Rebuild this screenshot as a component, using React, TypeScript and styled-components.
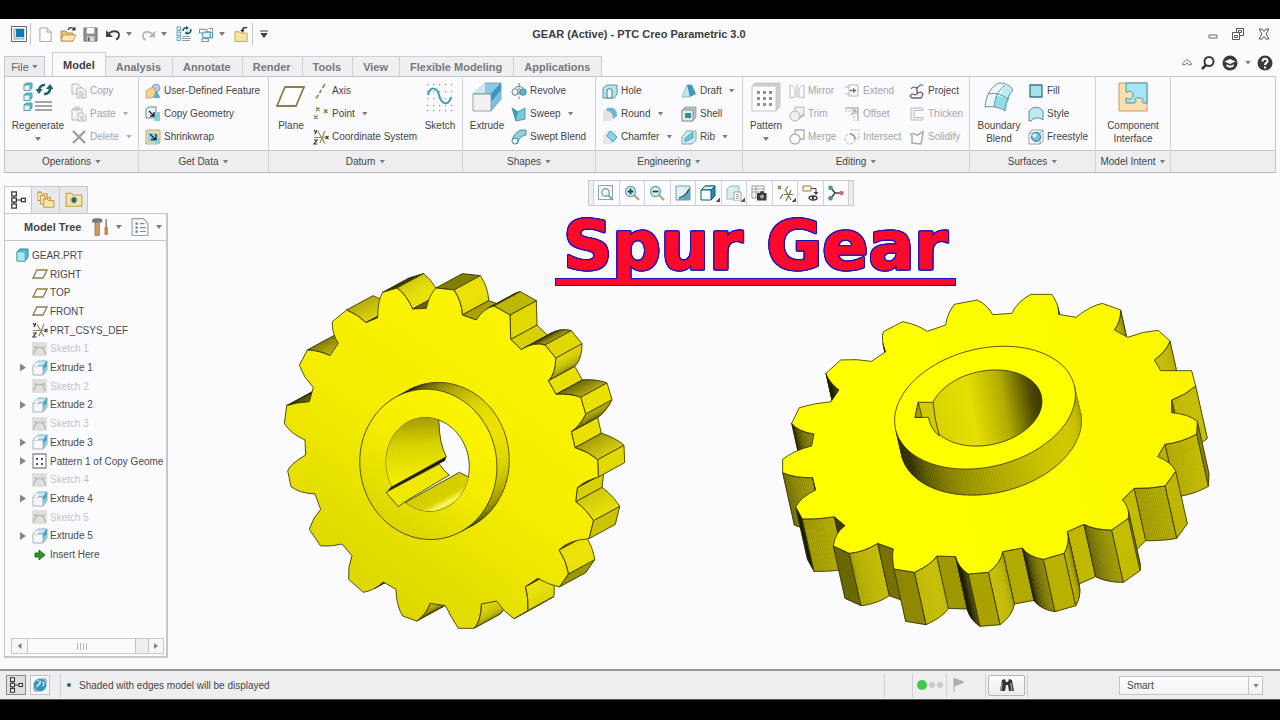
import React from "react";
import styled, { createGlobalStyle, css } from "styled-components";

const Global = createGlobalStyle`
  * { box-sizing: border-box; }
  body { margin: 0; background: #000; font-family: "Liberation Sans", Arial, sans-serif; font-size: 10px; color: #444; }
  button { font: inherit; color: inherit; background: none; border: 0; padding: 0; margin: 0; }
  svg { display: block; flex: none; }
`;

/* ---------- icons ---------- */

const T = "#3f9db3";
const cube = (
  <>
    <path d="M1 6L6 1h9l-4 5z" fill="#c9eaf5" stroke="#6aa3b5" strokeWidth=".8" />
    <path d="M11 6l4-5v9l-4 5z" fill="#4aa5c4" stroke="#6aa3b5" strokeWidth=".8" />
    <path d="M11 10l4-4v4l-4 5z" fill="#8fcfe2" />
    <path d="M1 6h10v9H1z" fill="#f7f7f7" stroke="#8fa4ad" strokeWidth=".8" />
    <path d="M1.500 6L6 1.500V6z" fill="#fff" />
  </>
);
const miniTree = (
  <g fill="#fff" stroke="#333" strokeWidth="1.100">
    <path d="M4.500 5v6M6 8h6" />
    <rect x="2.500" y=".8" width="4" height="3.600" />
    <rect x="2.500" y="6.200" width="4" height="3.600" />
    <rect x="2.500" y="11.600" width="4" height="3.600" />
    <rect x="11" y="6.500" width="3.500" height="3" />
  </g>
);
const folder = (x: number, y: number, w: number, h: number) => (
  <path d={`M${x} ${y}h${w * 0.35}l1.500 1.500H${x + w}v${h}H${x}z`} fill="#f7e3a6" stroke="#c09a4a" strokeWidth=".9" />
);
const csys = (
  <g fill="none" strokeWidth="1.200">
    <path d="M1 8.500h11M5 2.500l7 12M12 2l-5 12" stroke="#9a8a4a" />
    <path d="M1 1l1.500 2M4 1L2 5M1 11h3l-3 4h3.500M12.500 7l3 3M15.500 7l-3 3" stroke="#333" />
  </g>
);
const glass = (sign: React.ReactNode) => (
  <>
    <path d="M10 10l5 5" stroke="#c39a6a" strokeWidth="2.200" />
    <circle cx="6.500" cy="6.500" r="5" fill="#dff4f8" stroke="#6fa4b0" strokeWidth="1.300" />
    {sign}
  </>
);

const ICONS: Record<string, React.ReactNode> = {
  app: (
    <>
      <path d="M.5.500h15v15H.500z" fill="#fff" stroke="#666" />
      <path d="M3 3h10v10H3z" fill="#cfe3ef" stroke="#777" strokeWidth=".7" />
      <path d="M5 3h8v8H5z" fill="#0b79b8" />
    </>
  ),
  new: <path d="M2 1h7.500L14 5.500V15.500H2zM9.500 1v4.500H14" fill="#fcfcfc" stroke="#a3a3a3" />,
  open: (
    <>
      <path d="M1 5h5l1 2h6v8H1z" fill="#e6c67a" stroke="#b8924a" />
      <path d="M3 9h13l-3 6H1z" fill="#fbeab6" stroke="#c09a4a" />
      <path d="M8 4c1-3 4-3 6-1" stroke="#333" fill="none" strokeWidth="1.300" />
      <path d="M15.500.500v4h-4z" fill="#333" />
    </>
  ),
  save: (
    <>
      <path d="M1 1h14v14H1z" fill="#8e9296" stroke="#6f7478" />
      <path d="M4 1h8v6H4z" fill="#fff" />
      <path d="M4 10h8v5H4z" fill="#ddd" />
      <path d="M5 11h2v4H5z" fill="#555" />
    </>
  ),
  undo: (
    <>
      <path d="M3 9c3-5 11-5 11 0 0 2-1 4-3 4.500" fill="none" stroke="#444" strokeWidth="1.800" />
      <path d="M1 4v7h7z" fill="#444" />
    </>
  ),
  redo: (
    <>
      <path d="M13 9c-3-5-11-5-11 0 0 2 1 4 3 4.500" fill="none" stroke="#b5b5b8" strokeWidth="1.800" />
      <path d="M15 4v7H8z" fill="#b5b5b8" />
    </>
  ),
  regen: (
    <>
      {[1, 6, 11].map((y) => (
        <rect key={y} x="1" y={y} width="3.500" height="3.500" fill="#d8f1f6" stroke={T} strokeWidth=".8" />
      ))}
      <path d="M6 10.500h8M6 12.500h9M6 14.500h8" stroke="#999" strokeWidth="1" />
      <path d="M7 5a3 3 0 0 1 4-3M14.500 3a3 3 0 0 1-4 4" fill="none" stroke="#1c5f70" strokeWidth="1.600" />
      <path d="M10 0l3 2-3 2zM11.500 5v4l-3-2z" fill="#1c5f70" />
    </>
  ),
  windows: (
    <g fill="#fff" stroke="#7b8387">
      <path d="M.5 2.500h8v4h-8zM3 12.500h7v3H3z" />
      <path d="M6.500 5.500h8v6h-8z" fill="#dff2f7" stroke="#3f8ba0" />
      <path d="M4 5.500h8v6H4z" fill="#dff2f7" stroke="#3f8ba0" />
      <path d="M10.500 1.500h4v3" fill="none" />
    </g>
  ),
  closefolder: (
    <>
      {folder(1, 5, 13, 9)}
      <path d="M14 1c-3-1-5 0-5 3" fill="none" stroke="#333" strokeWidth="1.500" />
      <path d="M6.500 3h5L9 6z" fill="#333" />
    </>
  ),
  regenerate: (
    <>
      {[1, 11, 21].map((y) => (
        <g key={y} stroke="#57a3b8">
          <path d={`M1 ${y + 2}l2-2h6v5l-2 2z`} fill="#5db7cd" />
          <rect x="1" y={y + 2} width="6" height="5.500" fill="#dff5f9" />
        </g>
      ))}
      <path d="M12 20h17M12 24h17M12 28h17" stroke="#8b8b8b" strokeWidth="1.500" />
      <path d="M16 9a5.500 5.500 0 0 1 6-6M27 5a5.500 5.500 0 0 1-6 7" fill="none" stroke="#1c6072" strokeWidth="2.500" />
      <path d="M12.500 7h7L16 12zM23 7l4-5 3.500 5z" fill="#1c6072" />
    </>
  ),
  copy: (
    <g fill="#f4f4f4" stroke="#b9b9bb">
      <path d="M1 1h6l3 3v7H1z" />
      <path d="M6 5h6l3 3v7H6zM8 9h4M8 11h5M8 13h5" />
    </g>
  ),
  paste: (
    <g fill="#f4f4f4" stroke="#b9b9bb">
      <path d="M1 3h10v11H1zM4 1h4v3H4z" />
      <path d="M7 7h5l3 3v5H7zM9 11h4M9 13h4" />
    </g>
  ),
  del: <path d="M2 2l12 12M14 2L2 14" stroke="#9a9a9a" strokeWidth="2.200" />,
  udf: (
    <>
      <circle cx="11" cy="5" r="4" fill="#b8cdf0" stroke="#7b93bb" strokeWidth=".8" />
      <path d="M1 8l4-3h5v7l-3 3H1z" fill="#f4d48c" stroke="#b9935a" strokeWidth=".7" />
      <path d="M8 15l3.500-8 4 8z" fill="#5badd0" />
    </>
  ),
  copygeom: (
    <>
      <path d="M1 3l3-2h7v9l-3 2H1z" fill="#e7f4f7" stroke="#6e858c" />
      <path d="M9 6h6v9H9z" fill="#84cfe0" />
      <path d="M4 5l5 5M9 6v4H5" stroke="#222" strokeWidth="1.300" fill="none" />
    </>
  ),
  shrink: (
    <>
      <path d="M1 2l2-1h12v12l-2 2H1z" fill="#e9dcae" stroke="#b19c5c" strokeWidth=".8" />
      <path d="M3 4h10v9H3z" fill="#8fd3e2" />
      <path d="M10 9h5v6h-5z" fill="#84cfe0" />
      <path d="M5 5l5 5M11 5v5.500H6" stroke="#123" strokeWidth="1.300" fill="none" />
    </>
  ),
  plane: <path d="M9 5h19l-8 19H1z" fill="#fff" stroke="#8d7f45" strokeWidth="1.800" />,
  axis: <path d="M12 1l-2.500 4M8.500 7l-2 3M5.500 12L3 15.500" stroke="#8d7f45" strokeWidth="1.500" />,
  point: <path d="M3 1.500l3.500 3.500m0-3.500L3 5M11 3.500l3.500 3.500m0-3.500L11 7M1 9.500l3.500 3.500m0-3.500L1 13" stroke="#8d7f45" strokeWidth="1.400" />,
  csys,
  sketch: (
    <>
      {[2, 8, 14, 20, 26].flatMap((x) => [2, 9, 16, 23, 28].map((y) => <rect key={`${x}-${y}`} x={x} y={y} width="1.200" height="1.200" fill="#7a93b5" />))}
      <path d="M3 13c2-9 9-8 11 0s9 13 12 2" fill="none" stroke="#35a3bb" strokeWidth="2" />
    </>
  ),
  extrudebig: (
    <>
      <path d="M1 12L13 1h16l-10 11z" fill="#8cc9e4" stroke="#6aa0b8" strokeWidth=".8" />
      <path d="M13 1v10H1z" fill="#cfe9f4" />
      <path d="M19 12L29 1v16L19 29z" fill="#3d93c0" stroke="#5c9bb8" strokeWidth=".8" />
      <path d="M29 8v9L19 29v-9z" fill="#7cc0dd" />
      <path d="M1 12h18v17H1z" fill="#f1f1f3" stroke="#8d999f" strokeWidth=".9" />
    </>
  ),
  revolve: (
    <>
      <path d="M8 0v16" stroke="#777" strokeDasharray="3 1.500" />
      <ellipse cx="4" cy="9" rx="3" ry="3.300" fill="#eef8fa" stroke="#62808a" />
      <circle cx="12" cy="9" r="3.300" fill="#5cb4cc" stroke="#3c8ba1" />
      <path d="M4 5c2-2 6-2 8 0" stroke="#777" fill="none" />
    </>
  ),
  sweep: (
    <>
      <path d="M1 2l6 4 7-4v11l-9 2z" fill="#7cc8dd" stroke="#4b99b0" />
      <path d="M1 2l6 4-2 9z" fill="#3f9ab5" />
    </>
  ),
  blend: (
    <>
      <path d="M1 12c1-6 5-10 10-11h4v5c-5 1-8 4-8 8l-3 1z" fill="#8fd0e1" stroke="#4b8da3" />
      <ellipse cx="4" cy="12" rx="3" ry="3" fill="#e9f6fa" stroke="#57899a" />
    </>
  ),
  hole: (
    <>
      <path d="M1 5l4-3h10v9l-3 4H1z" fill="#b9e3ec" stroke="#5a99aa" />
      <path d="M5 15V8a2.500 2.500 0 0 1 5 0v7z" fill="#eefafc" stroke="#3d8397" />
    </>
  ),
  round: (
    <>
      <path d="M1 5l4-3h5v13H1z" fill="#e3e5e7" />
      <path d="M5 2h5c4 1 5 4 5 8l-4 3c0-5-2-8-6-8z" fill="#65b9d0" stroke="#8cc4d2" strokeWidth=".7" />
    </>
  ),
  chamfer: (
    <>
      <path d="M1 6l4-4h9v9l-4 4H1z" fill="#e3e5e7" />
      <path d="M8 2l7 6-4 5-6-6z" fill="#86d3e3" stroke="#4aa0b6" />
    </>
  ),
  draft: (
    <>
      <path d="M1 14L6 2h5l-2 12z" fill="#c3e6ef" stroke="#6cabbc" strokeWidth=".7" />
      <path d="M6 2l3 12 6-3-4-9z" fill="#3c9dbb" />
    </>
  ),
  shell: (
    <>
      <path d="M1 4l3-3h11v10l-3 4H1z" fill="#b9bfc2" stroke="#8c9397" strokeWidth=".7" />
      <path d="M1 4h11v11H1z" fill="#e6eaec" stroke="#8c9397" />
      <path d="M4 7h6v5H4z" fill="#2f8da5" />
    </>
  ),
  rib: (
    <>
      <path d="M1 8l5-6h9v9l-4 4H1z" fill="#d5edf2" stroke="#78a4b0" />
      <path d="M4 13V9l8-6v6z" fill="#6fc5d7" stroke="#4a9cb0" strokeWidth=".8" />
    </>
  ),
  pattern: (
    <>
      <path d="M1 4l3-3h25v24l-4 4z" fill="#d0d0d4" stroke="#bbb" strokeWidth=".7" />
      <path d="M1 4h24v25H1z" fill="#fff" stroke="#c4c4c8" />
      {[6, 12, 18].flatMap((x) => [9, 15, 21].map((y) => <path key={`${x}-${y}`} d={`M${x} ${y}h3v3h-3z`} fill="#8e9097" />))}
    </>
  ),
  mirror: <path d="M1 2c4 1 5 3 5 6v6L1 15zM15 2c-4 1-5 3-5 6v6l5 1zM8 1v14" fill="none" stroke="#bcbcc0" />,
  trim: (
    <g fill="#f1f1f3" stroke="#b5b5b9">
      <path d="M6 1h9v9H6z" />
      <circle cx="6" cy="10" r="5" />
      <path d="M10 13l5-5" stroke="#999" />
    </g>
  ),
  merge: (
    <g fill="none" stroke="#adadb1" strokeWidth="1.300">
      <path d="M6 4V1h9v9h-4" />
      <circle cx="6" cy="10" r="5" />
    </g>
  ),
  extend: (
    <g fill="none" stroke="#b5b5b9">
      <path d="M5 2h9v11H5zM1 4h4M1 11h4" />
      <path d="M6 7.500h5M9 5.500l2.500 2L9 9.500" stroke="#777" strokeWidth="1.300" />
    </g>
  ),
  offset: (
    <g fill="none" stroke="#b5b5b9">
      <path d="M1 2h13v13" strokeWidth="1.500" />
      <path d="M1 5h9v10" strokeDasharray="2 1.500" />
      <path d="M7 9l5-5M12 8V4H8" stroke="#999" />
    </g>
  ),
  intersect: (
    <g fill="none" stroke="#b5b5b9">
      <path d="M7 1h8v9H9" strokeDasharray="2 1.500" />
      <circle cx="6" cy="10" r="5" strokeDasharray="3 1.500" />
      <path d="M6 5a5 5 0 0 1 5 5" strokeWidth="1.800" stroke="#999" />
    </g>
  ),
  project: (
    <g fill="none" strokeWidth="1.300">
      <path d="M2 6c3-5 4 1 7-2s3-3 5-1" stroke="#777" />
      <path d="M1 13c3-5 4 1 7-2s4-2 6 0l-2 4H3z" stroke="#7a5a86" />
      <path d="M8 4v6" stroke="#555" />
    </g>
  ),
  thicken: <path d="M14 2H2v12h12v-2.500H5v-7h9z" fill="#f3f3f5" stroke="#bcbcc0" />,
  solidify: <path d="M1 6c4-5 6 3 9-1l5-3M3 6v8l9 1 2-11" fill="none" stroke="#aaaaae" strokeWidth="1.500" />,
  boundary: (
    <>
      <path d="M1 25C2 12 8 4 15 1c7 0 11 2 14 7-4 4-7 11-8 21-6-4-12-5-20-4z" fill="#e8f7fa" />
      <path d="M12 14c5 0 9 2 13 3-2 4-3 8-4 12-4-3-7-4-10-4 0-5 0-8 1-11z" fill="#8fdbe9" />
      <path d="M20 3c5 0 7 2 9 5l-5 9-7-3z" fill="#bdeaf2" />
      <path d="M1 25C2 12 8 4 15 1c7 0 11 2 14 7-4 4-7 11-8 21-6-4-12-5-20-4zM5 12c8-2 14 2 20 5M21 3c-7 6-10 12-11 22" fill="none" stroke="#6a8f99" strokeWidth="1" />
    </>
  ),
  fill: <path d="M2 2h12v12H2z" fill="#a5e0ec" stroke="#3b7285" strokeWidth="1.300" />,
  style: <path d="M1 5c4-5 10-5 14 0v9c-2-2-5-2-6-2-3 0-5 1-6 3H1z" fill="#bfe8f1" stroke="#5b8b99" />,
  freestyle: (
    <>
      <path d="M1 4l3-3h11v11l-3 3H1zM1 4h11v11M12 4l3-3" fill="none" stroke="#7c8a90" strokeWidth=".8" />
      <circle cx="8" cy="8" r="4.500" fill="#6ec3d7" stroke="#2b7e95" />
      <circle cx="6.500" cy="6.500" r="2" fill="#dff5fa" />
    </>
  ),
  component: (
    <>
      <path d="M1 1h28v28H1z" fill="#fbdfae" stroke="#c69c62" strokeWidth="1" />
      <path
        d="M8 1h21v20h-4c-1-1-2-2 0-3 1-3-9-3-8 0 2 1 1 2 0 3H8v-5c2 0 2 2 4 1 4-1 4-7 0-8-2 0-2 2-4 1z"
        fill="#a6e6f2"
        stroke="#4b93a6"
        strokeWidth="1"
      />
    </>
  ),
  tree: miniTree,
  folders: (
    <>
      {folder(0, 1, 9, 6)}
      {folder(3, 4, 9, 6)}
      {folder(6, 7, 9, 6)}
    </>
  ),
  favfolder: (
    <>
      {folder(1, 2, 14, 10)}
      <path d="M8 5v6M5 8h6M6 6l4 4M10 6l-4 4" stroke="#175e73" strokeWidth="1.100" />
    </>
  ),
  hammer: (
    <>
      <path d="M3.500 3h4v12.500h-4z" fill="#c79a68" stroke="#8f6a42" strokeWidth=".6" />
      <path d="M1 4V1.500C3-.500 8 .500 10 1v3z" fill="#777" />
      <path d="M13.500 1v8" stroke="#8a8a8a" strokeWidth="1.500" />
      <path d="M13.500 8v7" stroke="#c4814d" strokeWidth="3" />
    </>
  ),
  list: (
    <>
      <path d="M1 .5h10l4 4v11H1z" fill="#fbfbfb" stroke="#9aa0a4" />
      <path d="M4 5h2M4 8.500h2M4 12h2" stroke="#3f8ba0" strokeWidth="2" />
      <path d="M8 5h4M8 8.500h5M8 12h5" stroke="#888" />
    </>
  ),
  part: (
    <>
      <path d="M3 5l3-3h8v8l-3 4H3z" fill="#57c2dc" stroke="#2f7f96" />
      <path d="M3 5h8v9H3z" fill="#a8e8f5" stroke="#3f93a9" strokeWidth=".6" />
    </>
  ),
  planesmall: <path d="M5 4h10l-4 8H1z" fill="#fff" stroke="#8d7f45" strokeWidth="1.300" />,
  sketchsmall: (
    <>
      <path d="M0 1h15v14H0z" fill="#dfdfdc" />
      <path d="M1.500 13c2-9 10-9 12 0M2 6h3M10 6h3" fill="none" stroke="#b0b2ac" strokeWidth="1.200" />
    </>
  ),
  extrude: cube,
  patternsmall: (
    <>
      <path d="M1 1h13v14H1z" fill="#fff" stroke="#8b8b9b" strokeWidth="1.300" />
      <path d="M4 5h2v2H4zM9 5h2v2H9zM4 10h2v2H4zM9 10h2v2H9z" fill="#555" />
    </>
  ),
  insert: <path d="M3 6h4V3l6 5-6 5v-3H3z" fill="#2c9a1e" stroke="#14600c" strokeWidth=".8" />,
  refit: (
    <>
      <path d="M.5.500h14v14H.500z" fill="none" stroke="#8fa0a5" />
      <path d="M10 10l5 5" stroke="#9a9a9a" strokeWidth="2" />
      <circle cx="7.500" cy="7.500" r="3.800" fill="#e5f5f8" stroke="#62949f" strokeWidth="1.200" />
    </>
  ),
  zoomin: glass(<path d="M3.500 6.500h6M6.500 3.500v6" stroke="#124f60" strokeWidth="1.800" />),
  zoomout: glass(<path d="M3.500 6.500h6" stroke="#124f60" strokeWidth="1.800" />),
  repaint: (
    <>
      <path d="M1 1h14v14H1z" fill="#5ea9c2" stroke="#6f9fb0" />
      <path d="M1.500 1.500h13c-1 7-5 12-13 13z" fill="#dff1f6" />
      <path d="M4 13c4-1 8-4 10-9" stroke="#234f60" fill="none" strokeWidth="1.500" />
    </>
  ),
  display: (
    <>
      <path d="M1 5l4-4h10v10l-4 4z" fill="#2b8ba5" stroke="#135a6e" />
      <path d="M1 5l4-4h10l-4 4z" fill="#cfeff5" stroke="#135a6e" />
      <path d="M1 5h10v10H1z" fill="#f5fbfc" stroke="#135a6e" />
    </>
  ),
  saved: (
    <>
      <path d="M1 4l3-3h9v9l-3 4H1z" fill="#d9eef3" stroke="#9bb5bd" />
      <path d="M8 7h7v9H8zM10 9.500h3M10 11.500h3M10 13.500h3" fill="#fff" stroke="#8a8a8a" strokeWidth=".8" />
    </>
  ),
  camera: (
    <>
      <path d="M1 1h12v12H1zM1 4h12M1 7h12M5 1v12" fill="#fff" stroke="#999" />
      <path d="M6 8h3l1-2h2l1 2h2.500v7.500H6z" fill="#3a3a3a" />
      <circle cx="11" cy="11.500" r="2" fill="#aaa" />
    </>
  ),
  datum: <path d="M1 1l3 3m0-3L1 4M11 1L8 6M6 9l-3 5M7 9.500h9M9 6l5 9M14 5l-5 11" stroke="#7d713f" strokeWidth="1.200" fill="none" />,
  annotation: (
    <>
      <path d="M1 1h8v5H1z" fill="#fff9e6" stroke="#8d7f45" />
      <path d="M9 3.500h5V8" fill="none" stroke="#444" />
      <path d="M11.500 7h5L14 10z" fill="#444" />
      <ellipse cx="11" cy="13" rx="4" ry="2" fill="#fff" stroke="#333" strokeWidth="1.300" />
      <circle cx="11" cy="13" r="1.300" fill="#333" />
    </>
  ),
  spin: (
    <>
      <path d="M7 8h6M7 8L3 3M7 8l-4 5" stroke="#444" strokeWidth="1.500" />
      <circle cx="2.500" cy="2.800" r="2.300" fill="#4f9c72" />
      <circle cx="2.500" cy="13.200" r="2.300" fill="#4f8ea5" />
      <circle cx="13.500" cy="8" r="2.300" fill="#cf6d76" />
    </>
  ),
  globe: (
    <>
      <circle cx="8" cy="8" r="6.500" fill="#2f95cb" />
      <path d="M5 4c2-1 4 0 3 2s-3 2-3 4M10.500 5c2 1 2 3 0 4" fill="none" stroke="#bfe6f7" strokeWidth="1.800" />
      <ellipse cx="8" cy="8" rx="8" ry="3.800" transform="rotate(-45 8 8)" fill="none" stroke="#6b8796" />
    </>
  ),
  flag: <path d="M3 1v14M3.500 1.500L13 5l-9.500 4z" fill="#a9acb0" stroke="#a9acb0" />,
  binoculars: (
    <>
      <path d="M1 14L3 3l3-1 1 3h2l1-3 3 1 2 11h-5l-1-6H7l-1 6z" fill="#333" />
      <path d="M3 6l-1 8M12 6l1 8" stroke="#999" strokeWidth="1.500" />
    </>
  ),
  min: <path d="M5 9h8v3H5z" fill="#fff" stroke="#666" />,
  restore: (
    <g fill="#fff" stroke="#555">
      <path d="M6.500 2.500h7v7h-7z" />
      <path d="M8.500 4.500h3v2h-3z" />
      <path d="M2.500 6.500h7v7h-7z" />
      <path d="M4.500 9.500h3v2h-3z" />
    </g>
  ),
  close: <path d="M3 3h3l2 2.500L10 3h3l-3 5 3 5h-3l-2-2.500L6 13H3l3-5z" fill="#fff" stroke="#555" />,
  collapse: <path d="M3 8.500L8 4l5 4.500v1.500h-3L8 8l-2 2H3z" fill="#fff" stroke="#666" />,
  search: (
    <>
      <path d="M6 10l-4 4" stroke="#3a3a3a" strokeWidth="2.500" />
      <circle cx="9" cy="6.500" r="4.500" fill="none" stroke="#3a3a3a" strokeWidth="2" />
    </>
  ),
  learn: (
    <>
      <circle cx="8" cy="8" r="7.500" fill="#3a3a3a" />
      <path d="M2.500 6.500L8 4l5.500 2.500L8 9z" fill="#fff" />
      <path d="M4.500 9c2 2 5 2 7 0v2.500c-2 1.500-5 1.500-7 0z" fill="#fff" />
    </>
  ),
  help: (
    <>
      <circle cx="8" cy="8" r="7.500" fill="#3a3a3a" />
      <path d="M5.500 6.500c0-3.500 5-3.500 5-.5 0 2-2.500 1.800-2.500 4" fill="none" stroke="#fff" strokeWidth="2" />
      <path d="M7 11.500h2v2H7z" fill="#fff" />
    </>
  ),
};

const Icon = ({ name, size = 16, box = 16 }: { name: string; size?: number; box?: number }) => (
  <svg width={size} height={size} viewBox={`0 0 ${box} ${box}`} fill="none" aria-hidden="true">
    {ICONS[name]}
  </svg>
);

const Caret = styled.span`
  flex: none;
  width: 6px;
  height: 4px;
  background: #7b7b7f;
  clip-path: polygon(0 0, 100% 0, 50% 100%);
`;

/* ---------- frame ---------- */

const Page = styled.div`
  min-height: 100vh;
  padding: 19px 0 20px;
  display: flex;
  flex-direction: column;
  background: #000;
`;
const Window = styled.div`
  flex: 1;
  display: flex;
  flex-direction: column;
  background: #fbfbfe;
`;
const TitleBar = styled.header`
  height: 30px;
  padding: 0 8px 0 11px;
  display: grid;
  grid-template-columns: 1fr auto 1fr;
  align-items: center;
`;
const Divider = styled.span`
  flex: none;
  width: 1px;
  height: 22px;
  background: #c4c4c8;
`;
const IconButton = styled.button`
  display: flex;
  align-items: center;
  gap: 7px;
`;
const QuickBar = styled.div`
  display: flex;
  align-items: center;
  gap: 7px;
  ${Divider} {
    margin-left: -4px;
  }
  ${Caret} {
    margin: 0 2px 0 -2px;
  }
`;
const AppTitle = styled.h1`
  margin: 0 5px 0 0;
  font-size: 11px;
  font-weight: bold;
  color: #3c3c3c;
`;
const WindowButtons = styled.div`
  display: flex;
  justify-content: flex-end;
  gap: 10px;
`;

const TabRow = styled.nav`
  height: 27px;
  padding: 0 7px 0 4px;
  display: flex;
  align-items: flex-end;
`;
const FileTab = styled.button`
  height: 20px;
  width: 41px;
  margin-right: 7px;
  display: flex;
  align-items: center;
  justify-content: center;
  gap: 3px;
  border: 1px solid #c9c9cd;
  border-bottom: 0;
  background: #ececf0;
  font-size: 11px;
  color: #66666a;
`;
const Tab = styled.button<{ $active?: boolean }>`
  height: 20px;
  padding: 0 11px 0 10px;
  border: 1px solid #cfcfd3;
  border-width: 1px 1px 0 0;
  background: #efeff2;
  font-size: 11px;
  font-weight: bold;
  color: #77777c;
  ${(p) =>
    p.$active &&
    css`
      height: 25px;
      margin-bottom: -1px;
      padding: 0 10px;
      border-left-width: 1px;
      background: #fbfbfe;
      color: #3c3c3e;
    `}
`;
const TabTools = styled.div`
  margin-left: auto;
  align-self: center;
  display: flex;
  align-items: center;
  gap: 6px;
`;

const Ribbon = styled.section`
  margin: 0 4px;
  display: flex;
  border: 1px solid #c6c6ca;
  border-bottom-color: #b8b8bc;
`;
const Group = styled.div<{ $w: number; $last?: boolean }>`
  flex: ${(p) => p.$w} 1 ${(p) => p.$w}px;
  min-width: 0;
  display: flex;
  flex-direction: column;
  border-right: ${(p) => (p.$last ? "0" : "1px solid #d3d3d7")};
`;
const GroupBody = styled.div<{ $cols: string; $pad?: number }>`
  height: 73px;
  padding: 2px 0 0 ${(p) => p.$pad ?? 0}px;
  display: grid;
  grid-template-columns: ${(p) => p.$cols};
`;
const GroupTitle = styled.button`
  height: 22px;
  width: 100%;
  display: flex;
  align-items: center;
  justify-content: center;
  gap: 4px;
  border-top: 1px solid #c6c6ca;
  background: #eeeef1;
  white-space: nowrap;
`;
const BigButton = styled.button`
  padding-top: 3px;
  display: flex;
  flex-direction: column;
  align-items: center;
  align-self: start;
  gap: 7px;
  line-height: 13px;
`;
const BigLabel = styled.span`
  display: flex;
  flex-direction: column;
  align-items: center;
  gap: 5px;
  text-align: center;
`;
const Column = styled.div`
  display: grid;
  grid-auto-rows: 23px;
`;
const Command = styled.button<{ $muted?: boolean }>`
  display: flex;
  align-items: center;
  justify-self: start;
  gap: 3px;
  white-space: nowrap;
  color: ${(p) => (p.$muted ? "#a4a4a8" : "#444")};
  ${Caret} {
    margin-left: 4px;
    opacity: ${(p) => (p.$muted ? 0.6 : 1)};
  }
`;

type Cmd = [icon: string, label: string, flags?: string];
type Part = { big: string; label: React.ReactNode; menu?: boolean } | Cmd[];
type GroupData = { title: string; w: number; cols: string; pad?: number; parts: Part[] };

const GROUPS: GroupData[] = [
  { title: "Operations", w: 134, cols: "66px 1fr", parts: [{ big: "regenerate", label: "Regenerate", menu: true }, [["copy", "Copy", "m"], ["paste", "Paste", "mc"], ["del", "Delete", "mc"]]] },
  { title: "Get Data", w: 130, cols: "1fr", pad: 6, parts: [[["udf", "User-Defined Feature"], ["copygeom", "Copy Geometry"], ["shrink", "Shrinkwrap"]]] },
  { title: "Datum", w: 194, cols: "44px 105px 1fr", parts: [{ big: "plane", label: "Plane" }, [["axis", "Axis"], ["point", "Point", "c"], ["csys", "Coordinate System"]], { big: "sketch", label: "Sketch" }] },
  { title: "Shapes", w: 133, cols: "48px 1fr", parts: [{ big: "extrudebig", label: "Extrude" }, [["revolve", "Revolve"], ["sweep", "Sweep", "c"], ["blend", "Swept Blend"]]] },
  { title: "Engineering", w: 147, cols: "79px 1fr", pad: 6, parts: [[["hole", "Hole"], ["round", "Round", "c"], ["chamfer", "Chamfer", "c"]], [["draft", "Draft", "c"], ["shell", "Shell"], ["rib", "Rib", "c"]]] },
  {
    title: "Editing",
    w: 227,
    cols: "46px 55px 65px 1fr",
    parts: [
      { big: "pattern", label: "Pattern", menu: true },
      [["mirror", "Mirror", "m"], ["trim", "Trim", "m"], ["merge", "Merge", "m"]],
      [["extend", "Extend", "m"], ["offset", "Offset", "m"], ["intersect", "Intersect", "m"]],
      [["project", "Project"], ["thicken", "Thicken", "m"], ["solidify", "Solidify", "m"]],
    ],
  },
  { title: "Surfaces", w: 126, cols: "58px 1fr", parts: [{ big: "boundary", label: <>Boundary<br />Blend</> }, [["fill", "Fill"], ["style", "Style"], ["freestyle", "Freestyle"]]] },
  { title: "Model Intent", w: 75, cols: "1fr", parts: [{ big: "component", label: <>Component<br />Interface</> }] },
];

const RibbonGroup = ({ title, w, cols, pad, parts }: GroupData) => (
  <Group $w={w}>
    <GroupBody $cols={cols} $pad={pad}>
      {parts.map((part, i) =>
        Array.isArray(part) ? (
          <Column key={i}>
            {part.map(([icon, label, flags = ""]) => (
              <Command key={label} $muted={flags.includes("m")}>
                <Icon name={icon} />
                {label}
                {flags.includes("c") && <Caret />}
              </Command>
            ))}
          </Column>
        ) : (
          <BigButton key={i}>
            <Icon name={part.big} size={30} box={30} />
            <BigLabel>
              <span>{part.label}</span>
              {part.menu && <Caret />}
            </BigLabel>
          </BigButton>
        )
      )}
    </GroupBody>
    <GroupTitle>
      {title}
      <Caret />
    </GroupTitle>
  </Group>
);

/* ---------- workspace ---------- */

const Workspace = styled.main`
  flex: 1;
  display: grid;
  grid-template-columns: 168px 1fr;
`;
const Sidebar = styled.aside`
  padding: 13px 0 11px 4px;
  min-width: 0;
  display: flex;
  flex-direction: column;
`;
const PanelTabs = styled.div`
  display: flex;
  height: 27px;
`;
const PanelTab = styled.button<{ $active?: boolean }>`
  width: 28px;
  display: grid;
  place-items: center;
  border: 1px solid #c9c9cd;
  border-left-width: ${(p) => (p.$active ? 1 : 0)}px;
  border-bottom: 0;
  background: ${(p) => (p.$active ? "#fbfbfe" : "#e9e9ed")};
`;
const Panel = styled.div`
  flex: 1;
  min-width: 0;
  display: flex;
  flex-direction: column;
  border: 1px solid #c6c6ca;
  border-width: 1px 2px 2px 1px;
`;
const PanelHeader = styled.div`
  height: 27px;
  padding: 0 4px 0 19px;
  display: flex;
  align-items: center;
  justify-content: space-between;
  border-bottom: 1px solid #c6c6ca;
`;
const PanelTitle = styled.h2`
  margin: 0;
  font-size: 11px;
  color: #444;
`;
const Tree = styled.ul`
  height: 318px;
  margin: 5px 0 auto;
  padding: 0;
  list-style: none;
  display: grid;
  grid-auto-rows: 1fr;
`;
const TreeRow = styled.li<{ $root?: boolean; $muted?: boolean }>`
  padding-left: ${(p) => (p.$root ? 9 : 15)}px;
  display: flex;
  align-items: center;
  gap: 2px;
  white-space: nowrap;
  color: ${(p) => (p.$muted ? "#c3c3c6" : "#4a4a4c")};
`;
const Expander = styled.span<{ $on: boolean }>`
  flex: none;
  width: 6px;
  height: 8px;
  margin-right: 4px;
  background: ${(p) => (p.$on ? "#85858a" : "transparent")};
  clip-path: polygon(0 0, 100% 50%, 0 100%);
`;
const ScrollBar = styled.div`
  height: 16px;
  margin: 0 2px 2px 6px;
  display: flex;
  border: 1px solid #c9c9cd;
  background: #eeeef1;
`;
const ScrollArrow = styled.button<{ $left?: boolean }>`
  width: 15px;
  display: grid;
  place-items: center;
  border-left: ${(p) => (p.$left ? "0" : "1px solid #c4c4c8")};
  background: #f6f6f9;
  &::before {
    content: "";
    width: 4px;
    height: 6px;
    background: #808085;
    clip-path: ${(p) => (p.$left ? "polygon(100% 0, 0 50%, 100% 100%)" : "polygon(0 0, 100% 50%, 0 100%)")};
  }
`;
const ScrollThumb = styled.div`
  flex: 1;
  margin-right: 12px;
  display: grid;
  place-items: center;
  border: 1px solid #c4c4c8;
  border-width: 0 1px;
  background: #fafafc;
  &::before {
    content: "";
    width: 10px;
    height: 7px;
    background: repeating-linear-gradient(90deg, #b5b5b9 0 1px, transparent 1px 3px);
  }
`;

type Row = { icon: string; label: string; root?: boolean; muted?: boolean; open?: boolean };
const TREE: Row[] = [
  { icon: "part", label: "GEAR.PRT", root: true },
  { icon: "planesmall", label: "RIGHT" },
  { icon: "planesmall", label: "TOP" },
  { icon: "planesmall", label: "FRONT" },
  { icon: "csys", label: "PRT_CSYS_DEF" },
  { icon: "sketchsmall", label: "Sketch 1", muted: true },
  { icon: "extrude", label: "Extrude 1", open: true },
  { icon: "sketchsmall", label: "Sketch 2", muted: true },
  { icon: "extrude", label: "Extrude 2", open: true },
  { icon: "sketchsmall", label: "Sketch 3", muted: true },
  { icon: "extrude", label: "Extrude 3", open: true },
  { icon: "patternsmall", label: "Pattern 1 of Copy Geome", open: true },
  { icon: "sketchsmall", label: "Sketch 4", muted: true },
  { icon: "extrude", label: "Extrude 4", open: true },
  { icon: "sketchsmall", label: "Sketch 5", muted: true },
  { icon: "extrude", label: "Extrude 5", open: true },
  { icon: "insert", label: "Insert Here" },
];

const Canvas = styled.section`
  min-width: 0;
  padding-top: 7px;
  display: flex;
  flex-direction: column;
`;
const ViewBar = styled.div`
  align-self: center;
  width: 266px;
  height: 26px;
  margin-right: 6px;
  display: flex;
  border: 1px solid #c9c9cd;
  padding: 0 4px;
  background: #eeeef1;
`;
const ViewButton = styled.button<{ $menu: boolean }>`
  flex: 1;
  display: grid;
  place-items: center;
  border-left: 1px solid #d3d3d7;
  background: ${(p) =>
    p.$menu ? "linear-gradient(135deg, transparent 50%, #555 50%) right 1px bottom 3px / 4px 4px no-repeat #fcfcfe" : "#fcfcfe"};
  &:last-child {
    border-right: 1px solid #d3d3d7;
  }
`;
const VIEW_TOOLS: [string, string, boolean][] = [
  ["refit", "Refit", false],
  ["zoomin", "Zoom In", false],
  ["zoomout", "Zoom Out", false],
  ["repaint", "Repaint", false],
  ["display", "Display Style", true],
  ["saved", "Saved Orientations", true],
  ["camera", "View Manager", false],
  ["datum", "Datum Display Filters", true],
  ["annotation", "Annotation Display", false],
  ["spin", "Spin Center", false],
];
const Scene = styled.div`
  flex: 1;
  display: grid;
  > * {
    grid-area: 1 / 1;
  }
`;
const Caption = styled.h2`
  position: relative;
  justify-self: center;
  align-self: start;
  margin: 3px 0 0 63px;
  padding: 0 7px;
  font-family: "DejaVu Sans", Verdana, sans-serif;
  font-size: 68px;
  line-height: 74px;
  font-weight: bold;
  color: #fc0a2c;
  -webkit-text-stroke: 1px #fc0a2c;
  filter: drop-shadow(1px 0 #1414c0) drop-shadow(-1px 0 #1414c0) drop-shadow(0 1px #1414c0) drop-shadow(0 -1px #1414c0);
  &::after {
    content: "";
    position: absolute;
    left: 0;
    right: 0;
    bottom: -2px;
    height: 6px;
    background: #fc0a2c;
  }
`;
const Drawing = styled.svg`
  width: 100%;
  height: 100%;
`;

/* ---------- gears ---------- */

type Pt = [number, number];
type Seg = number[]; // [x, y] is a straight edge, [cx, cy, x, y] a quadratic flank

const LEFT: Seg[] = [
  [323, 173], [323, 120, 338, 97], [381, 84], [410, 105, 428, 147], [469, 145], [477, 105, 498, 84], [552, 90], [575, 125, 577, 165], [619, 180],
  [640, 145, 672, 138], [720, 165], [722, 238], [754, 269], [790, 245, 825, 255], [857, 294], [857, 340, 835, 362], [858, 403], [900, 400, 932, 412],
  [947, 462], [930, 497, 904, 515], [915, 563], [955, 575, 983, 599], [985, 651], [945, 662, 922, 683], [917, 725], [950, 750, 970, 782], [957, 836],
  [895, 840, 867, 870], [890, 905, 895, 942], [868, 981], [830, 972, 803, 955], [766, 980], [776, 1015, 773, 1052], [732, 1076], [700, 1055, 680, 1023],
  [634, 1032], [632, 1085, 612, 1105], [565, 1105], [545, 1075, 526, 1037], [480, 1030], [468, 1065, 440, 1083], [398, 1068], [378, 1035, 378, 988],
  [340, 966], [310, 993, 280, 997], [236, 958], [233, 920, 246, 887], [216, 852], [190, 860, 152, 858], [118, 808], [127, 775, 152, 748], [135, 702],
  [90, 700, 63, 680], [53, 632], [63, 610, 107, 585], [105, 540], [60, 520, 43, 490], [50, 437], [75, 428, 118, 425], [130, 382], [100, 352, 88, 316],
  [112, 270], [150, 272, 180, 287], [205, 250], [185, 220, 187, 185], [230, 150], [265, 165, 288, 188],
];
const RIGHT: Seg[] = [
  [527, 135], [532, 100, 553, 73], [622, 60], [653, 75, 668, 104], [725, 100], [745, 62, 783, 43], [845, 43], [866, 70, 866, 103], [918, 112],
  [960, 78, 997, 70], [1052, 90], [1052, 125, 1033, 150], [1073, 172], [1120, 153, 1165, 151], [1200, 183], [1188, 215, 1153, 240], [1172, 272],
  [1265, 272], [1277, 318], [1245, 345, 1205, 360], [1205, 398], [1255, 402, 1282, 424], [1280, 462], [1235, 487, 1185, 493], [1163, 530],
  [1203, 545, 1217, 574], [1185, 618], [1140, 626, 1092, 625], [1057, 660], [1080, 682, 1075, 715], [1025, 750], [975, 750, 942, 733], [892, 755],
  [900, 790, 882, 820], [820, 838], [775, 830, 757, 804], [698, 815], [692, 850, 655, 877], [595, 882], [565, 862, 557, 830], [500, 828],
  [485, 853, 433, 877], [372, 867], [365, 830, 370, 807], [323, 790], [285, 815, 238, 820], [190, 798], [195, 758, 225, 737], [193, 710],
  [150, 718, 97, 717], [77, 680], [95, 650, 137, 630], [128, 593], [75, 594, 38, 578], [38, 538], [75, 510, 125, 498], [132, 462], [85, 455, 65, 430],
  [88, 383], [130, 370, 183, 365], [207, 330], [175, 305, 168, 280], [212, 240], [260, 236, 304, 244], [347, 215], [332, 180, 340, 155], [398, 125],
  [440, 133, 472, 154],
];

const ring = (cx: number, cy: number, a: number, b: number, tilt: number): Seg[] => {
  const t = (tilt * Math.PI) / 180;
  return Array.from({ length: 180 }, (_, i) => {
    const u = (i * Math.PI) / 90;
    const x = a * Math.cos(u);
    const y = b * Math.sin(u);
    return [cx + x * Math.cos(t) - y * Math.sin(t), cy + x * Math.sin(t) + y * Math.cos(t)];
  });
};

const end = (s: Seg): Pt => [s[s.length - 2], s[s.length - 1]];
const facePath = (segs: Seg[]) => `M${end(segs[0])}${segs.slice(1).map((s) => (s.length === 4 ? `Q${s}` : `L${s}`)).join("")}Z`;

const Walls = ({ segs, v, light, base, gain, edges = true }: { segs: Seg[]; v: Pt; light: number; base: number; gain: number; edges?: boolean }) => {
  const th = (light * Math.PI) / 180;
  const walls = segs.map((seg, i) => {
    const p = end(segs[(i + segs.length - 1) % segs.length]);
    const q = end(seg);
    const n = seg.length === 4 ? 16 : 1;
    const at = (t: number): Pt =>
      n === 1
        ? [p[0] + (q[0] - p[0]) * t, p[1] + (q[1] - p[1]) * t]
        : [(1 - t) ** 2 * p[0] + 2 * t * (1 - t) * seg[0] + t * t * q[0], (1 - t) ** 2 * p[1] + 2 * t * (1 - t) * seg[1] + t * t * q[1]];
    const strips: { d: string; fill: string }[] = [];
    const line: Pt[] = [];
    for (let k = 0; k < n; k++) {
      const a = at(k / n);
      const b = at((k + 1) / n);
      const nx = b[1] - a[1];
      const ny = a[0] - b[0];
      if (nx * v[0] + ny * v[1] <= 0) continue;
      const len = Math.hypot(nx, ny) || 1;
      const lit = base + gain * Math.max(0, (nx / len) * Math.cos(th) + (-ny / len) * Math.sin(th));
      const c = Math.min(1, lit) * 245;
      if (!line.length) line.push(a);
      line.push(b);
      strips.push({
        d: `M${a}L${b}L${b[0] + v[0]} ${b[1] + v[1]}L${a[0] + v[0]} ${a[1] + v[1]}Z`,
        fill: `rgb(${Math.round(c)},${Math.round(c * 0.96)},0)`,
      });
    }
    return { key: ((p[0] + q[0]) / 2) * v[0] + ((p[1] + q[1]) / 2) * v[1], strips, line };
  });
  return (
    <>
      {walls
        .filter((w) => w.strips.length)
        .sort((a, b) => a.key - b.key)
        .map((w, i) => {
          const back = w.line.map(([x, y]) => `${x + v[0]} ${y + v[1]}`).reverse();
          return (
            <g key={i}>
              {w.strips.map((s, k) => (
                <path key={k} d={s.d} fill={s.fill} stroke={s.fill} strokeWidth="1.500" />
              ))}
              <path
                d={edges ? `M${w.line.join("L")}L${back.join("L")}Z` : `M${back.join("L")}`}
                fill="none"
                stroke="#2c2a00"
                strokeWidth="2.400"
                strokeLinejoin="round"
              />
            </g>
          );
        })}
    </>
  );
};

const ink = { stroke: "#2c2a00", strokeWidth: 2.4, strokeLinejoin: "round" as const };

const LeftGear = () => (
  <g transform="translate(270 260) scale(.33333)">
    <Walls segs={LEFT} v={[79, -43]} light={20} base={0.2} gain={0.76} />
    <path d={facePath(LEFT)} fill="url(#faceLeft)" {...ink} />
    <Walls segs={ring(475, 613, 205, 226, -10)} v={[37, -20]} light={24} base={0.12} gain={0.84} edges={false} />
    <path d={facePath(ring(475, 613, 205, 226, -10))} fill="url(#faceLeft)" {...ink} />
    <path d={facePath(ring(473, 613, 124, 141, -12))} fill="#fbfbfe" {...ink} />
    <g clipPath="url(#boreLeft)">
      <path d="M330 450H500Q505 470 507 487Q508 550 529 590L350 690Z" fill="url(#boreShade)" {...ink} />
      <path d="M410 725L568 637L610 658V780H400Z" fill="url(#boreFloor)" {...ink} />
    </g>
    <path d="M362 682L529 590L525 602L350 697Z" fill="#1d1b00" />
    <path d="M348 697L508 612Q520 632 538 645L410 722L385 740Z" fill="#efe800" {...ink} />
  </g>
);

const RightGear = () => (
  <g transform="translate(770 280) scale(.33333)">
    <Walls segs={RIGHT} v={[35, 157]} light={-52} base={0.12} gain={0.68} />
    <path d={facePath(RIGHT)} fill="url(#faceRight)" {...ink} />
    <Walls segs={ring(645, 383, 276, 177, -14)} v={[18, 78]} light={-42} base={0.18} gain={0.66} edges={false} />
    <path d={facePath(ring(645, 383, 276, 177, -14))} fill="#fffe00" {...ink} />
    <path d={facePath(ring(648, 384, 170, 111, -12))} fill="url(#boreRight)" {...ink} />
    <path d="M445 367H489Q494 420 508 468Q482 448 475 412H435Z" fill="#d2cb00" {...ink} />
    <path d="M445 367L456 412L435 412Z" fill="#a8a200" {...ink} />
  </g>
);

const Gears = () => (
  <Drawing viewBox="168 206 1112 463" role="img" aria-label="Two views of a spur gear">
    <defs>
      <linearGradient id="faceLeft" x1=".8" y1=".2" x2=".3" y2="1">
        <stop offset="0" stopColor="#fbf400" />
        <stop offset=".45" stopColor="#f3ec00" />
        <stop offset="1" stopColor="#dad400" />
      </linearGradient>
      <linearGradient id="faceRight" x1=".3" y1=".4" x2="1" y2=".3">
        <stop offset="0" stopColor="#ffff00" />
        <stop offset="1" stopColor="#fbf600" />
      </linearGradient>
      <linearGradient id="boreShade" gradientUnits="userSpaceOnUse" x1="430" y1="460" x2="440" y2="650">
        <stop offset="0" stopColor="#9a9400" />
        <stop offset=".5" stopColor="#d8d200" />
        <stop offset="1" stopColor="#f2eb00" />
      </linearGradient>
      <linearGradient id="boreFloor" gradientUnits="userSpaceOnUse" x1="500" y1="660" x2="545" y2="745">
        <stop offset="0" stopColor="#cfc900" />
        <stop offset=".6" stopColor="#d8d200" />
        <stop offset=".8" stopColor="#fdfb60" />
        <stop offset="1" stopColor="#b0aa00" />
      </linearGradient>
      <linearGradient id="boreRight" gradientUnits="userSpaceOnUse" x1="490" y1="400" x2="812" y2="340">
        <stop offset="0" stopColor="#d8d200" />
        <stop offset=".35" stopColor="#e6df00" />
        <stop offset=".65" stopColor="#b3ad00" />
        <stop offset=".9" stopColor="#4f4c00" />
        <stop offset="1" stopColor="#3a3800" />
      </linearGradient>
      <clipPath id="boreLeft">
        <path d={facePath(ring(473, 613, 124, 141, -12))} />
      </clipPath>
    </defs>
    <LeftGear />
    <RightGear />
  </Drawing>
);

/* ---------- status bar ---------- */

const StatusBar = styled.footer`
  height: 31px;
  padding: 0 17px 0 6px;
  display: flex;
  align-items: center;
  border-top: 2px solid #98989c;
  border-bottom: 1px solid #5c5854;
  background: #eeeef1;
`;
const StatusButton = styled.button<{ $pressed?: boolean }>`
  width: 20px;
  height: 20px;
  margin-right: 4px;
  display: grid;
  place-items: center;
  border: 1px solid ${(p) => (p.$pressed ? "#8a8a8e" : "#c4c4c8")};
  background: ${(p) => (p.$pressed ? "#e0e0e4" : "#f8f8fa")};
`;
const Message = styled.p`
  flex: 1;
  height: 23px;
  margin: 0 0 0 6px;
  padding-left: 6px;
  display: flex;
  align-items: center;
  gap: 8px;
  border-left: 1px solid #cfcfd3;
  &::before {
    content: "";
    width: 4px;
    height: 4px;
    border-radius: 50%;
    background: #24657a;
  }
`;
const StatusCell = styled.div<{ $w: number }>`
  width: ${(p) => p.$w}px;
  height: 23px;
  padding-left: 4px;
  display: flex;
  align-items: center;
  gap: 2px;
  border-left: 1px solid #cfcfd3;
`;
const Dot = styled.span<{ $on?: boolean }>`
  width: ${(p) => (p.$on ? 10 : 6)}px;
  height: ${(p) => (p.$on ? 10 : 6)}px;
  border-radius: 50%;
  background: ${(p) => (p.$on ? "#41cb4a" : "#c9cccd")};
`;
const FindButton = styled.button`
  width: 37px;
  height: 21px;
  margin-left: -2px;
  display: grid;
  place-items: center;
  border: 1px solid #b5b5b9;
  border-radius: 2px;
  background: linear-gradient(#fdfdfd, #ececf0);
`;
const FilterBox = styled.div`
  position: relative;
  width: 144px;
  &::before {
    content: "";
    position: absolute;
    top: 0;
    right: 0;
    width: 14px;
    height: 100%;
    border-left: 1px solid #c4c4c8;
    pointer-events: none;
  }
  ${Caret} {
    position: absolute;
    top: 8px;
    right: 4px;
    pointer-events: none;
  }
`;
const Filter = styled.select`
  display: block;
  width: 100%;
  height: 19px;
  padding: 0 7px;
  appearance: none;
  border: 1px solid #c4c4c8;
  border-radius: 0;
  background: linear-gradient(#fdfdfe, #f3f3f6);
  font: inherit;
  color: #444;
`;

const TABS = ["Model", "Analysis", "Annotate", "Render", "Tools", "View", "Flexible Modeling", "Applications"];

export default function App() {
  return (
    <Page>
      <Global />
      <Window>
        <TitleBar>
          <QuickBar>
            <IconButton aria-label="Window menu"><Icon name="app" /></IconButton>
            <Divider />
            <IconButton aria-label="New"><Icon name="new" size={15} /></IconButton>
            <IconButton aria-label="Open"><Icon name="open" /></IconButton>
            <IconButton aria-label="Save"><Icon name="save" size={15} /></IconButton>
            <IconButton aria-label="Undo"><Icon name="undo" /><Caret /></IconButton>
            <IconButton aria-label="Redo"><Icon name="redo" size={15} /><Caret /></IconButton>
            <IconButton aria-label="Regenerate model"><Icon name="regen" /></IconButton>
            <IconButton aria-label="Windows"><Icon name="windows" size={15} /><Caret /></IconButton>
            <IconButton aria-label="Close window"><Icon name="closefolder" size={15} /></IconButton>
            <Divider />
            <IconButton aria-label="Customize toolbar">
              <svg width="8" height="8" viewBox="0 0 8 8" aria-hidden="true">
                <path d="M0 1h8M1 3.500h6L4 7.500z" fill="#444" stroke="#444" strokeWidth="1" />
              </svg>
            </IconButton>
          </QuickBar>
          <AppTitle>GEAR (Active) - PTC Creo Parametric 3.0</AppTitle>
          <WindowButtons>
            <IconButton aria-label="Minimize"><Icon name="min" /></IconButton>
            <IconButton aria-label="Restore"><Icon name="restore" /></IconButton>
            <IconButton aria-label="Close"><Icon name="close" /></IconButton>
          </WindowButtons>
        </TitleBar>

        <TabRow>
          <FileTab>File <Caret /></FileTab>
          {TABS.map((t) => (
            <Tab key={t} $active={t === "Model"}>{t}</Tab>
          ))}
          <TabTools>
            <IconButton aria-label="Collapse ribbon"><Icon name="collapse" size={14} /></IconButton>
            <IconButton aria-label="Search"><Icon name="search" /></IconButton>
            <IconButton aria-label="Learning"><Icon name="learn" /><Caret /></IconButton>
            <IconButton aria-label="Help"><Icon name="help" /></IconButton>
          </TabTools>
        </TabRow>

        <Ribbon>
          {GROUPS.map((g) => (
            <RibbonGroup key={g.title} {...g} />
          ))}
          <Group $w={104} $last>
            <GroupBody $cols="1fr" />
            <GroupTitle as="div" />
          </Group>
        </Ribbon>

        <Workspace>
          <Sidebar>
            <PanelTabs>
              <PanelTab $active aria-label="Model tree"><Icon name="tree" size={18} /></PanelTab>
              <PanelTab aria-label="Folder browser"><Icon name="folders" size={18} /></PanelTab>
              <PanelTab aria-label="Favorites"><Icon name="favfolder" size={18} /></PanelTab>
            </PanelTabs>
            <Panel>
              <PanelHeader>
                <PanelTitle>Model Tree</PanelTitle>
                <IconButton aria-label="Settings"><Icon name="hammer" size={18} /><Caret /></IconButton>
                <IconButton aria-label="Show"><Icon name="list" size={18} /><Caret /></IconButton>
              </PanelHeader>
              <Tree>
                {TREE.map((r) => (
                  <TreeRow key={r.label} $root={r.root} $muted={r.muted}>
                    {!r.root && <Expander $on={!!r.open} />}
                    <Icon name={r.icon} />
                    {r.label}
                  </TreeRow>
                ))}
              </Tree>
              <ScrollBar>
                <ScrollArrow $left aria-label="Scroll left" />
                <ScrollThumb />
                <ScrollArrow aria-label="Scroll right" />
              </ScrollBar>
            </Panel>
          </Sidebar>

          <Canvas>
            <ViewBar>
              {VIEW_TOOLS.map(([icon, label, menu]) => (
                <ViewButton key={icon} $menu={menu} aria-label={label}>
                  <Icon name={icon} />
                </ViewButton>
              ))}
            </ViewBar>
            <Scene>
              <Gears />
              <Caption>Spur Gear</Caption>
            </Scene>
          </Canvas>
        </Workspace>

        <StatusBar>
          <StatusButton $pressed aria-label="Toggle model tree"><Icon name="tree" /></StatusButton>
          <StatusButton aria-label="Toggle browser"><Icon name="globe" /></StatusButton>
          <Message>Shaded with edges model will be displayed</Message>
          <StatusCell $w={28} />
          <StatusCell $w={34}><Dot $on /><Dot /><Dot /></StatusCell>
          <StatusCell $w={39}><Icon name="flag" /></StatusCell>
          <StatusCell $w={42}>
            <FindButton aria-label="Find"><Icon name="binoculars" /></FindButton>
          </StatusCell>
          <StatusCell $w={92} />
          <FilterBox>
            <Filter aria-label="Selection filter" defaultValue="Smart">
              <option>Smart</option>
            </Filter>
            <Caret />
          </FilterBox>
        </StatusBar>
      </Window>
    </Page>
  );
}
